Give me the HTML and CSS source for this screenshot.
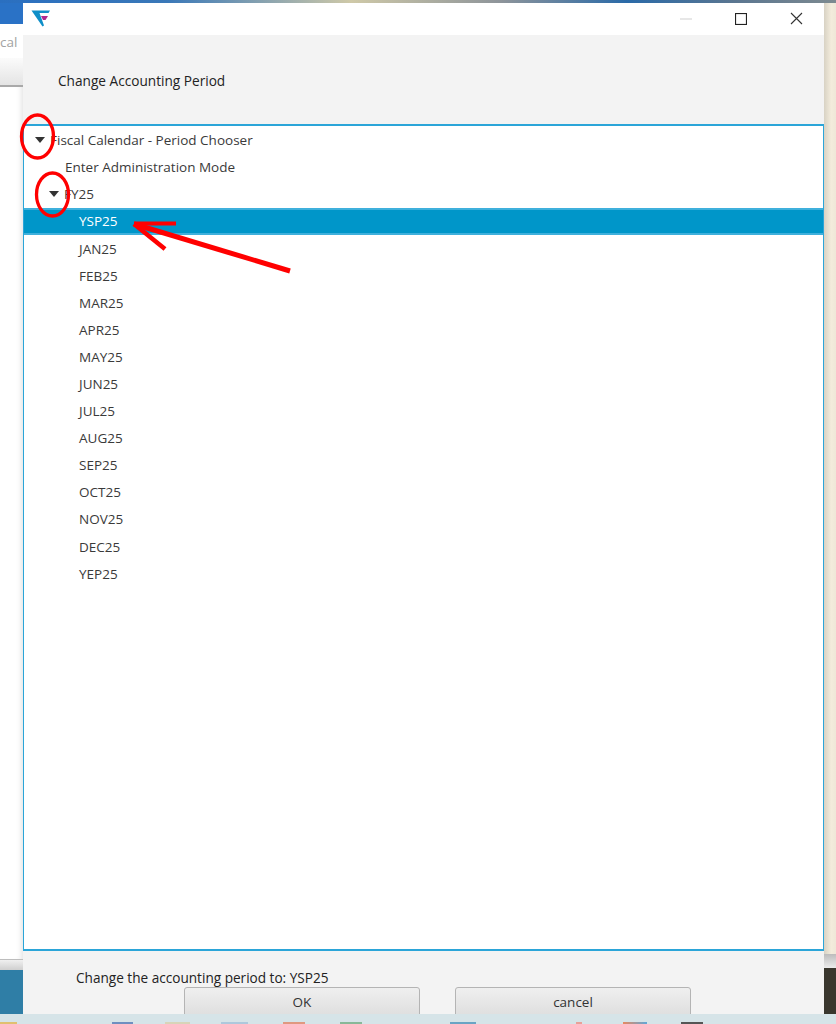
FILE: index.html
```html
<!DOCTYPE html>
<html lang="en">
<head>
<meta charset="utf-8">
<title>Change Accounting Period</title>
<link rel="stylesheet" href="styles.css">
</head>
<body>
<div class="desktop">
  <div class="back-left">
    <div class="bl-blue"></div>
    <div class="bl-cal">cal</div>
    <div class="bl-grad"></div>
    <div class="bl-white"></div>
    <div class="bl-grey"></div>
    <div class="bl-teal"></div>
  </div>
  <div class="back-top"></div>
  <div class="back-right">
    <div class="br-beige"></div>
    <div class="br-grey"></div>
    <div class="br-dark"></div>
  </div>

  <div class="dialog">
    <div class="titlebar">
      <svg class="logo" width="20" height="18" viewBox="0 0 20 18">
        <path d="M0.500 1.500H19L17.500 4H8.500L13 16.500L11.500 17.500Z" fill="#0f8fc8"/>
        <path d="M10 7H17L14.500 11H12Z" fill="#b02a8e"/>
      </svg>
      <div class="winctl">
        <svg width="12" height="2" viewBox="0 0 12 2"><path d="M0 1H12" stroke="#cfcfcf" stroke-width="1"/></svg>
        <svg width="12" height="12" viewBox="0 0 12 12"><rect x="0.500" y="0.500" width="11" height="11" fill="none" stroke="#222" stroke-width="1.200"/></svg>
        <svg width="13" height="13" viewBox="0 0 13 13"><path d="M1 1L12 12M12 1L1 12" stroke="#333" stroke-width="1.100"/></svg>
      </div>
    </div>
    <div class="header">Change Accounting Period</div>
    <div class="tree">
      <div class="row lvl0"><span class="caret"></span><span class="label">Fiscal Calendar - Period Chooser</span></div>
      <div class="row lvl1">Enter Administration Mode</div>
      <div class="row lvl1b"><span class="caret"></span><span class="label">FY25</span></div>
      <div class="row lvl2 selected">YSP25</div>
      <div class="row lvl2">JAN25</div>
      <div class="row lvl2">FEB25</div>
      <div class="row lvl2">MAR25</div>
      <div class="row lvl2">APR25</div>
      <div class="row lvl2">MAY25</div>
      <div class="row lvl2">JUN25</div>
      <div class="row lvl2">JUL25</div>
      <div class="row lvl2">AUG25</div>
      <div class="row lvl2">SEP25</div>
      <div class="row lvl2">OCT25</div>
      <div class="row lvl2">NOV25</div>
      <div class="row lvl2">DEC25</div>
      <div class="row lvl2">YEP25</div>
    </div>
    <div class="footer">
      <div class="status">Change the accounting period to: YSP25</div>
      <div class="buttons">
        <button class="btn" type="button">OK</button>
        <button class="btn" type="button">cancel</button>
      </div>
    </div>
  </div>

  <div class="taskbar">
    <i class="tb tb1"></i><i class="tb tb2"></i><i class="tb tb3"></i><i class="tb tb4"></i><i class="tb tb5"></i>
    <i class="tb tb6"></i><i class="tb tb7"></i><i class="tb tb8"></i><i class="tb tb9"></i><i class="tb tb10"></i>
  </div>

  <svg class="annot" width="836" height="1024" viewBox="0 0 836 1024" fill="none" stroke="#ff0000">
    <ellipse cx="37.500" cy="136.500" rx="16" ry="21.500" stroke-width="3.300"/>
    <ellipse cx="52.500" cy="194.500" rx="16" ry="21.500" stroke-width="3.300"/>
    <path d="M134 223.500H176" stroke-width="4"/>
    <path d="M134 224L290 271" stroke-width="5"/>
    <path d="M134 224L165 249" stroke-width="4.500"/>
  </svg>
</div>
</body>
</html>
```
FILE: styles.css
```css
* { box-sizing: border-box; }
html, body { margin: 0; padding: 0; }
body { width: 836px; height: 1024px; overflow: hidden; font-family: "Open Sans", "Noto Sans", sans-serif; }
.desktop { position: relative; width: 836px; height: 1024px; overflow: hidden; background: #fff; }

.back-top { position: absolute; left: 0; top: 0; width: 836px; height: 3px;
  background: linear-gradient(90deg, #2a6fc0 0, #3a78b8 20%, #cfc9a8 42%, #8d949a 60%, #2a6aa8 75%, #5b7690 88%, #7d8a90 100%); }
.back-left { position: absolute; left: 0; top: 0; width: 23px; height: 1014px; display: flex; flex-direction: column; }
.bl-blue { height: 24px; background: #2a72c6; }
.bl-cal { height: 34px; background: #fff; color: #a3a3a3; font-size: 13.5px; line-height: 36px; }
.bl-grad { height: 29px; background: linear-gradient(#fbfbfb, #e4e4e4); border-bottom: 2px solid #a9a9a9; }
.bl-white { height: 872px; background: #fff; box-shadow: inset -6px 0 6px -5px #ddd; }
.bl-grey { height: 11px; background: linear-gradient(#f0f0f0, #cfcfcf); border-top: 1px solid #bdbdbd; }
.bl-teal { flex: 1; background: #2f7ea6; }

.back-right { position: absolute; left: 824px; top: 3px; width: 12px; height: 1011px; display: flex; flex-direction: column; }
.br-beige { height: 951px; background: linear-gradient(90deg, #d8d2c4, #f3ecdc 60%, #efe8d8); }
.br-grey { height: 14px; background: linear-gradient(#bcbcbc, #ececec); }
.br-dark { flex: 1; background: #3a372e; }

.dialog { position: absolute; left: 23px; top: 3px; width: 801px; height: 1011px; background: #f3f3f3; display: flex; flex-direction: column; overflow: hidden; }
.titlebar { height: 32px; background: #fff; position: relative; display: flex; align-items: center; justify-content: space-between; flex: none; }
.logo { margin-left: 8px; margin-top: -3px; }
.winctl { display: flex; align-items: center; gap: 43px; margin-right: 21px; margin-top: -1px; }
.header { height: 89px; flex: none; padding: 37px 0 0 35px; font-size: 13.65px; line-height: 18px; color: #222; }
.tree { flex: none; height: 827px; padding-top: 0.6px; background: #fff; border: 1px solid #2ba5d8; border-top-width: 2px; border-bottom-width: 2px; color: #3a3a3a; font-size: 13.5px; }
.row { height: 27.1px; line-height: 26px; white-space: nowrap; display: flex; align-items: center; }
.lvl0 { padding-left: 11px; }
.lvl1 { padding-left: 41px; }
.lvl1b { padding-left: 25px; }
.lvl2 { padding-left: 55px; }
.caret { width: 0; height: 0; border-left: 5px solid transparent; border-right: 5px solid transparent; border-top: 6px solid #333; margin-top: -1px; margin-right: 5px; }
.selected { background: #0096c9; color: #fff; border-top: 2px solid #3fb0dc; border-bottom: 2px solid #3fb0dc; }
.footer { flex: 1; position: relative; min-height: 0; padding: 18px 0 0 53px; }
.status { font-size: 13.6px; line-height: 18px; color: #222; }
.buttons { display: flex; gap: 35px; margin-left: 108px; }
.btn { width: 236px; height: 34px; flex: none; padding: 0 0 4px; border: 1px solid #b4b4b4; border-radius: 3px; background: linear-gradient(#efefef, #dcdcdc); color: #333; font: 13.5px "Open Sans", "Noto Sans", sans-serif; }

.taskbar { position: absolute; left: 0; top: 1014px; width: 836px; height: 10px; background: #d6e4e8; }
.tb { position: absolute; top: 8px; height: 2px; display: block; }
.tb1 { left: 0; width: 17px; background: #e0c070; }
.tb2 { left: 112px; width: 21px; background: #6f8fc0; }
.tb3 { left: 165px; width: 25px; background: #d8d4b8; }
.tb4 { left: 221px; width: 27px; background: #aec8dc; }
.tb5 { left: 283px; width: 22px; background: #e09880; }
.tb6 { left: 340px; width: 22px; background: #88b898; }
.tb7 { left: 450px; width: 26px; background: #6aa4c4; }
.tb8 { left: 576px; width: 6px; background: #e8a098; }
.tb9 { left: 623px; width: 24px; background: linear-gradient(90deg, #e88860, #60a8d8); }
.tb10 { left: 681px; width: 22px; background: #555; }

.annot { position: absolute; left: 0; top: 0; pointer-events: none; }
```
